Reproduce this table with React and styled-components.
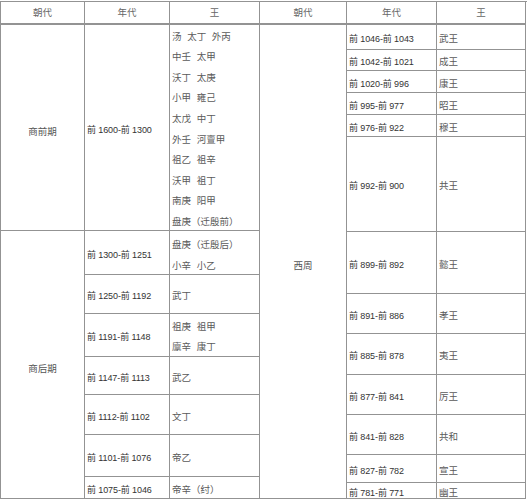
import React from 'react';
import styled, { createGlobalStyle } from 'styled-components';

const LINE = '#939393';

const GlobalStyle = createGlobalStyle`
  body {
    margin: 0;
    background: #fff;
  }
`;

const Page = styled.div`
  display: flex;
  width: 526px;
  margin-top: 1px;
  border-top: 1px solid ${LINE};
  border-left: 1px solid ${LINE};
  font-family: "Liberation Sans", "Noto Sans CJK SC", sans-serif;
  font-size: 9.5px;
  line-height: 12px;
  color: #3a3a3a;
`;

const Half = styled.div`
  display: grid;
  grid-template-columns: ${p => p.$cols};
  grid-template-rows: ${p => p.$rows};
`;

const Cell = styled.div`
  box-sizing: border-box;
  min-width: 0;
  display: flex;
  flex-direction: column;
  justify-content: center;
  padding: 4px 0 0 2px;
  border-right: 1px solid ${LINE};
  border-bottom: 1px solid ${LINE};
  white-space: nowrap;
`;

const YearCell = styled(Cell)`
  font-size: 9px;
  letter-spacing: -0.1px;
  color: #333;
`;

const HeadCell = styled(Cell)`
  align-items: center;
  padding: 0;
  border-bottom: 2px solid ${LINE};
  color: #666;
`;

const DynastyCell = styled(Cell)`
  grid-row: span ${p => p.$span};
  align-items: center;
  padding: 8px 0 0;
  color: #555;
`;

const KingCell = styled(Cell)`
  color: #5a5a5a;
  word-spacing: 3px;
`;

const KingLine = styled.div`
  line-height: ${p => p.$lh || 12}px;
`;

const shang = {
  cols: '84px 85px 90px',
  periods: [
    {
      name: '商前期',
      rows: [
        {
          h: 206,
          lh: 20.6,
          year: '前 1600-前 1300',
          kings: ['汤 太丁 外丙', '中壬 太甲', '沃丁 太庚', '小甲 雍己', '太戊 中丁', '外壬 河亶甲', '祖乙 祖辛', '沃甲 祖丁', '南庚 阳甲', '盘庚（迁殷前）'],
        },
      ],
    },
    {
      name: '商后期',
      rows: [
        { h: 44, lh: 21, year: '前 1300-前 1251', kings: ['盘庚（迁殷后）', '小辛 小乙'] },
        { h: 39, year: '前 1250-前 1192', kings: ['武丁'] },
        { h: 43, lh: 20, year: '前 1191-前 1148', kings: ['祖庚 祖甲', '廪辛 康丁'] },
        { h: 38, year: '前 1147-前 1113', kings: ['武乙'] },
        { h: 40, year: '前 1112-前 1102', kings: ['文丁'] },
        { h: 42, year: '前 1101-前 1076', kings: ['帝乙'] },
        { h: 22, year: '前 1075-前 1046', kings: ['帝辛（纣）'] },
      ],
    },
  ],
};

const zhou = {
  cols: '87px 90px 89px',
  periods: [
    {
      name: '西周',
      rows: [
        { h: 25, year: '前 1046-前 1043', kings: ['武王'] },
        { h: 21, year: '前 1042-前 1021', kings: ['成王'] },
        { h: 22, year: '前 1020-前 996', kings: ['康王'] },
        { h: 22, year: '前 995-前 977', kings: ['昭王'] },
        { h: 22, year: '前 976-前 922', kings: ['穆王'] },
        { h: 95, year: '前 992-前 900', kings: ['共王'] },
        { h: 62, year: '前 899-前 892', kings: ['懿王'] },
        { h: 40, year: '前 891-前 886', kings: ['孝王'] },
        { h: 41, year: '前 885-前 878', kings: ['夷王'] },
        { h: 40, year: '前 877-前 841', kings: ['厉王'] },
        { h: 40, year: '前 841-前 828', kings: ['共和'] },
        { h: 28, year: '前 827-前 782', kings: ['宣王'] },
        { h: 16, year: '前 781-前 771', kings: ['幽王'] },
      ],
    },
  ],
};

const HEAD = ['朝代', '年代', '王'];

function DynastyTable({ data }) {
  const heights = data.periods.flatMap(p => p.rows.map(r => r.h + 'px'));
  return (
    <Half $cols={data.cols} $rows={['23px', ...heights].join(' ')}>
      {HEAD.map(h => <HeadCell key={h}>{h}</HeadCell>)}
      {data.periods.map(period => (
        <React.Fragment key={period.name}>
          <DynastyCell $span={period.rows.length}>{period.name}</DynastyCell>
          {period.rows.map(row => (
            <React.Fragment key={row.year}>
              <YearCell>{row.year}</YearCell>
              <KingCell>
                {row.kings.map(k => <KingLine key={k} $lh={row.lh}>{k}</KingLine>)}
              </KingCell>
            </React.Fragment>
          ))}
        </React.Fragment>
      ))}
    </Half>
  );
}

export default function App() {
  return (
    <>
      <GlobalStyle />
      <Page>
        <DynastyTable data={shang} />
        <DynastyTable data={zhou} />
      </Page>
    </>
  );
}
